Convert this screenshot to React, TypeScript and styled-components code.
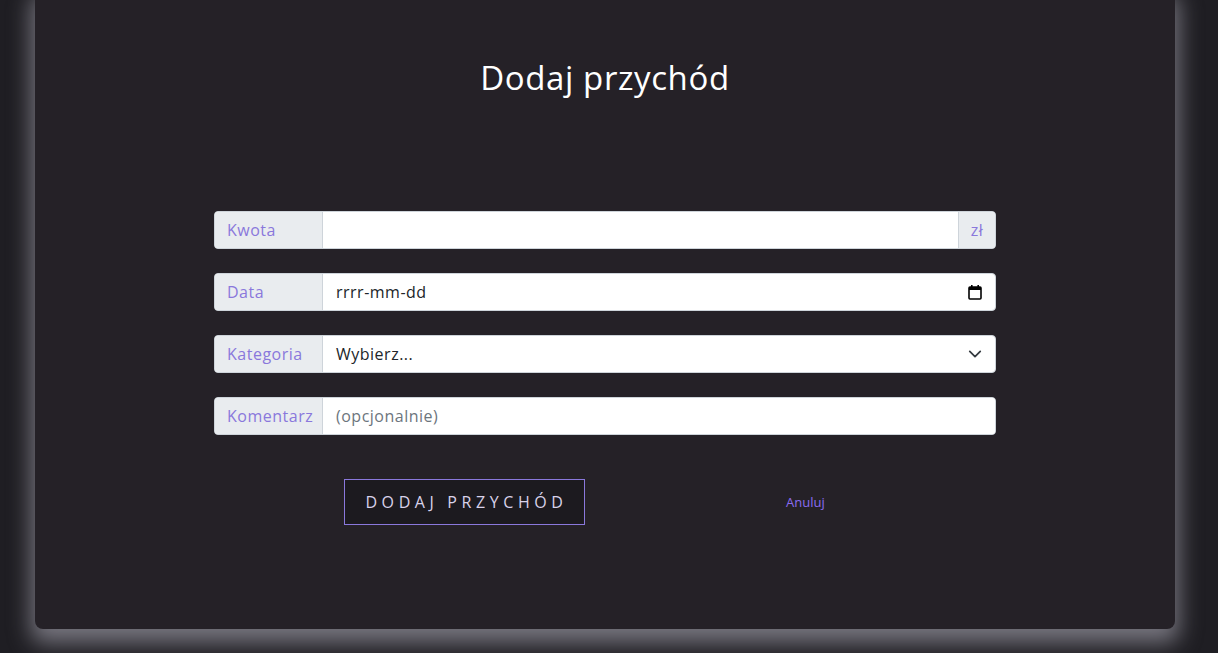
import React from "react";
import styled, { createGlobalStyle } from "styled-components";

const Global = createGlobalStyle`
  html { overflow: hidden; background: #1f1e23; }
  body { margin: 0; padding: 0; background: #1f1e23; font-family: "Open Sans", "Noto Sans", sans-serif; }
  * { box-sizing: border-box; }
`;

const Page = styled.div`
  width: 1218px;
  height: 653px;
  padding: 0 43px 0 35px;
  display: flex;
  flex-direction: column;
`;

const Card = styled.section`
  margin-top: -12px;
  height: 641px;
  flex: none;
  background: #252127;
  border-radius: 8px;
  box-shadow: 0 10px 22px 4px rgba(190, 188, 200, 0.55);
  display: flex;
  flex-direction: column;
  align-items: center;
  padding-top: 70px;
`;

const Title = styled.h1`
  margin: 0;
  font-family: "Open Sans", sans-serif;
  font-weight: 400;
  font-size: 33px;
  line-height: 40px;
  color: #ffffff;
  letter-spacing: 0.6px;
`;

const Form = styled.form`
  width: 782px;
  margin-top: 113px;
  display: flex;
  flex-direction: column;
  gap: 24px;
`;

const Group = styled.div`
  display: flex;
  height: 38px;
  border-radius: 4px;
  background: #ffffff;
  border: 1px solid #ced4da;
  overflow: hidden;
`;

const Addon = styled.span<{ $side?: "left" | "right" }>`
  flex: none;
  width: ${(p) => (p.$side === "right" ? "37px" : "108px")};
  background: #e9ecef;
  color: #8a78dc;
  font-size: 16px;
  letter-spacing: 0.5px;
  display: flex;
  align-items: center;
  justify-content: ${(p) => (p.$side === "right" ? "center" : "flex-start")};
  padding-left: ${(p) => (p.$side === "right" ? "0" : "12px")};
  border-right: ${(p) => (p.$side === "right" ? "none" : "1px solid #ced4da")};
  border-left: ${(p) => (p.$side === "right" ? "1px solid #ced4da" : "none")};
`;

const Field = styled.input`
  flex: 1;
  min-width: 0;
  border: none;
  outline: none;
  background: #ffffff;
  font-family: "Open Sans", sans-serif;
  font-size: 16px;
  letter-spacing: 0.5px;
  color: #212529;
  padding: 0 13px;
  &::placeholder { color: #6c757d; }
`;

const FakeField = styled.div`
  flex: 1;
  display: flex;
  align-items: center;
  justify-content: space-between;
  padding: 0 13px 0 13px;
  font-size: 16px;
  letter-spacing: 0.5px;
  color: #212529;
`;

const Actions = styled.div`
  margin-top: 20px;
  display: flex;
  align-items: center;
  padding-left: 130px;
`;

const Submit = styled.button`
  width: 241px;
  height: 46px;
  background: #1c1a1f;
  border: 1px solid #8a78dc;
  color: #d9d2ea;
  font-family: "Open Sans", sans-serif;
  font-size: 16px;
  letter-spacing: 4.6px;
  text-transform: uppercase;
  padding: 0 0 0 4px;
`;

const Cancel = styled.a`
  margin-left: 201px;
  color: #8b6cf0;
  font-size: 13px;
  text-decoration: none;
`;

const CalendarIcon = () => (
  <svg width="14" height="16" viewBox="0 0 14 16">
    <rect x="1" y="3" width="12" height="12" rx="1" fill="none" stroke="#000" strokeWidth="1.6" />
    <rect x="1" y="3" width="12" height="3" fill="#000" />
    <rect x="3" y="1" width="1.6" height="3" fill="#000" />
    <rect x="9.4" y="1" width="1.6" height="3" fill="#000" />
  </svg>
);

const Chevron = () => (
  <svg width="14" height="14" viewBox="0 0 16 16">
    <path d="M2 5l6 6 6-6" fill="none" stroke="#343a40" strokeWidth="2" strokeLinecap="round" strokeLinejoin="round" />
  </svg>
);

export default function App() {
  return (
    <>
      <Global />
      <Page>
        <Card>
          <Title>Dodaj przychód</Title>
          <Form onSubmit={(e) => e.preventDefault()}>
            <Group>
              <Addon>Kwota</Addon>
              <Field type="text" />
              <Addon $side="right">zł</Addon>
            </Group>
            <Group>
              <Addon>Data</Addon>
              <FakeField>
                <span>rrrr-mm-dd</span>
                <CalendarIcon />
              </FakeField>
            </Group>
            <Group>
              <Addon>Kategoria</Addon>
              <FakeField>
                <span>Wybierz...</span>
                <Chevron />
              </FakeField>
            </Group>
            <Group>
              <Addon>Komentarz</Addon>
              <Field type="text" placeholder="(opcjonalnie)" />
            </Group>
            <Actions>
              <Submit type="submit">Dodaj przychód</Submit>
              <Cancel href="#">Anuluj</Cancel>
            </Actions>
          </Form>
        </Card>
      </Page>
    </>
  );
}
